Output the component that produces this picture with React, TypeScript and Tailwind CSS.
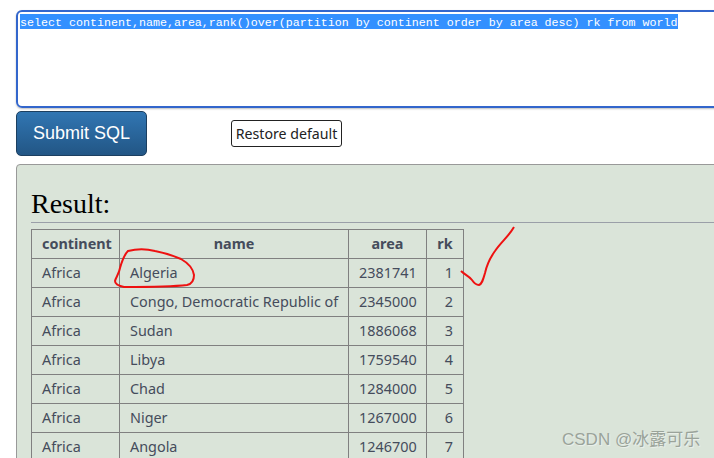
const rows = [
  ["Africa", "Algeria", "2381741", "1"],
  ["Africa", "Congo, Democratic Republic of", "2345000", "2"],
  ["Africa", "Sudan", "1886068", "3"],
  ["Africa", "Libya", "1759540", "4"],
  ["Africa", "Chad", "1284000", "5"],
  ["Africa", "Niger", "1267000", "6"],
  ["Africa", "Angola", "1246700", "7"],
]

const query =
  "select continent,name,area,rank()over(partition by continent order by area desc) rk from world"

const th = "h-[29px] border border-[#808080] px-[10px] pt-0 pb-px text-center font-bold"
const td = "h-[29px] border border-[#808080] px-[10px] pt-0 pb-px"

export default function App() {
  return (
    <div className="relative h-[458px] w-[714px] overflow-hidden bg-white pl-4 pt-[10px]">
      {/* Query box */}
      <div className="h-[98px] w-[760px] rounded-[6px] border-2 border-[#3366cc] px-[2px] pt-[2px] shadow-[0_1px_2px_rgba(0,0,0,0.25)]">
        <div className="h-[15px] w-fit whitespace-nowrap bg-[#3390ff] font-['Liberation_Mono',monospace] text-[11.67px] leading-[18px] text-white">
          {query}
        </div>
      </div>

      {/* Buttons */}
      <div className="mt-[3px] flex h-[45px] items-center">
        <button className="h-[45px] w-[131px] rounded-[5px] border border-[#1c3f60] bg-gradient-to-b from-[#3176b3] to-[#225685] font-['Liberation_Sans',sans-serif] text-[18px] text-white">
          Submit SQL
        </button>
        <button className="ml-[84px] h-[27px] w-[111px] rounded-[3px] border border-[#222] bg-white font-['Noto_Sans',sans-serif] text-[14.2px] leading-[22px] text-[#222]">
          Restore default
        </button>
      </div>

      {/* Result panel */}
      <div className="mt-2 h-[400px] w-[760px] rounded-[4px] border border-[#999] bg-[#dae4d9] pl-[14px] pt-[20px]">
        <h2 className="font-['Liberation_Serif',serif] text-[28px] leading-[37px] text-black">
          Result:
        </h2>
        <div className="h-px bg-[#9a9fa8]" />
        <table className="mt-[6px] w-[432px] table-fixed border-collapse font-['Noto_Sans',sans-serif] text-[14.4px] text-[#454c5c]">
          <thead>
            <tr>
              <th className={`${th} w-[88px]`}>continent</th>
              <th className={`${th} w-[229px]`}>name</th>
              <th className={`${th} w-[78px]`}>area</th>
              <th className={`${th} w-[37px]`}>rk</th>
            </tr>
          </thead>
          <tbody>
            {rows.map((r) => (
              <tr key={r[1]}>
                <td className={td}>{r[0]}</td>
                <td className={`${td} whitespace-nowrap`}>{r[1]}</td>
                <td className={`${td} text-right`}>{r[2]}</td>
                <td className={`${td} text-right`}>{r[3]}</td>
              </tr>
            ))}
          </tbody>
        </table>
      </div>

      {/* Red pen marks */}
      <svg className="pointer-events-none absolute left-0 top-0" width="714" height="458" fill="none">
        <path
          d="M128 251C136 249 147 249 155 251C165 253 174 256 181 259C188 263 193 268 194 275C194 280 192 284 187 285C170 287 145 287 124 287C119 286 115 284 115 281C116 277 119 274 120 268C122 261 124 255 128 251Z"
          stroke="#ee1111"
          strokeWidth="2"
        />
        <path
          d="M461 271C465 275 469 276 472 280C474 283 477 285 479 285C482 284 483 280 485 273C487 264 490 258 495 251C501 242 509 236 514 227"
          stroke="#ee1111"
          strokeWidth="2"
        />
      </svg>

      {/* Watermark */}
      <div className="absolute left-[562px] top-[430px] font-['Liberation_Sans','Noto_Sans_CJK_SC',sans-serif] text-[17px] leading-5 text-[#9aa39a] [text-shadow:1px_1px_1px_rgba(255,255,255,0.5)]">
        CSDN @冰露可乐
      </div>
    </div>
  )
}
